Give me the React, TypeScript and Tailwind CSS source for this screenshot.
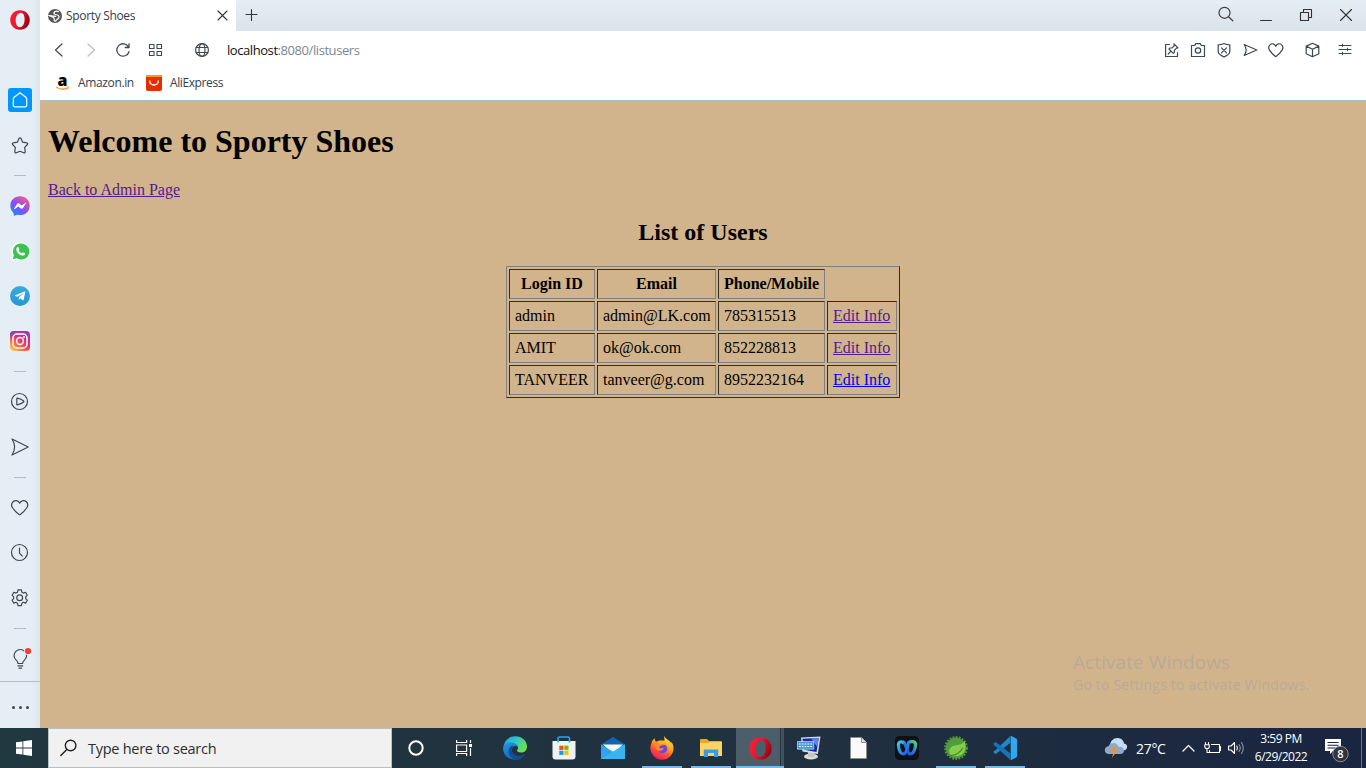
import React from "react";
import type { ReactNode } from "react";
import { FaFacebookMessenger, FaTelegramPlane } from "react-icons/fa";

type IconProps = {
  w: number;
  h?: number;
  children: ReactNode;
  stroke?: string;
  sw?: number;
  className?: string;
};

function Line({ w, h, children, stroke = "#3f474f", sw = 1.2, className = "" }: IconProps) {
  const hh = h ?? w;
  return (
    <svg
      width={w}
      height={hh}
      viewBox={`0 0 ${w} ${hh}`}
      fill="none"
      stroke={stroke}
      strokeWidth={sw}
      strokeLinecap="round"
      strokeLinejoin="round"
      className={`block shrink-0 overflow-visible ${className}`}
    >
      {children}
    </svg>
  );
}

function OperaLogo({ size, id }: { size: number; id: string }) {
  return (
    <svg width={size} height={size} viewBox="0 0 24 24" className="block shrink-0">
      <defs>
        <linearGradient id={id} x1="0" y1="0" x2="1" y2="0.4">
          <stop offset="0" stopColor="#ff1f35" />
          <stop offset="0.5" stopColor="#ee1730" />
          <stop offset="1" stopColor="#9c0714" />
        </linearGradient>
      </defs>
      <path
        fillRule="evenodd"
        fill={`url(#${id})`}
        d="M12 .3C5.300 .3 .3 5.300 .3 12S5.300 23.700 12 23.700 23.700 18.700 23.700 12 18.700 .3 12 .3ZM12.800 3.400c3.200-.2 4.900 3.600 4.700 8.600-.2 4.800-2.500 8.700-5.600 8.700-3.300 0-5.100-3.700-5.100-8.400 0-4.900 2.800-8.700 6-8.900Z"
      />
    </svg>
  );
}

function Slot({ children }: { children: ReactNode }) {
  return <div className="flex h-[45px] w-10 shrink-0 items-center justify-center">{children}</div>;
}

function Divider() {
  return (
    <div className="flex h-4 w-10 shrink-0 items-center justify-center">
      <div className="h-px w-3 bg-[#afbecb]" />
    </div>
  );
}

function Sidebar() {
  return (
    <aside className="flex h-[728px] w-10 shrink-0 flex-col bg-linear-to-r from-[#e5edf5] from-80% to-[#dce4ed]">
      <div className="flex h-10 shrink-0 items-center justify-center">
        <OperaLogo size={20} id="operaSide" />
      </div>
      <div className="mt-[37.5px] flex flex-col">
        <Slot>
          <div className="flex size-6 items-center justify-center rounded-[3px] bg-[#0096ff]">
            <Line w={18} stroke="#fff">
              <path d="M9 1.700 3.200 6.200Q2.300 7 2.300 8v6.600q0 1.200 1.200 1.200h11q1.200 0 1.200-1.200V8q0-1-.9-1.800Z" />
            </Line>
          </div>
        </Slot>
        <Slot>
          <Line w={18} className="mt-px">
            <path d="M7.900 1.600Q9 .2 10.100 1.600l1.500 3.600 4.200.6q1.500.4.6 1.700l-2.700 2.900.5 4.300q0 1.500-1.500 1.100L9 14.300l-3.700 1.500q-1.500.4-1.500-1.100l.5-4.300-2.700-2.900Q.700 6.200 2.200 5.800l4.200-.6Z" />
          </Line>
        </Slot>
        <Divider />
        <Slot>
          <svg width="0" height="0" className="absolute">
            <defs>
              <linearGradient id="msg" x1="0.2" y1="1" x2="0.9" y2="0">
                <stop offset="0" stopColor="#168dff" />
                <stop offset="0.45" stopColor="#8d49fb" />
                <stop offset="1" stopColor="#ff5f77" />
              </linearGradient>
            </defs>
          </svg>
          <div className="flex size-5 items-center justify-center rounded-full bg-[radial-gradient(circle,#fff_50%,transparent_52%)]">
            <FaFacebookMessenger size={20} fill="url(#msg)" stroke="none" />
          </div>
        </Slot>
        <Slot>
          <svg width="19" height="19" viewBox="0 0 18 18" className="block">
            <path d="M9.300.2a8.500 8.500 0 1 1-4 16.300L.3 17.800l1.300-4.900A8.500 8.500 0 0 1 9.300.2Z" fill="#fff" />
            <path d="M9.300 1.400A7.600 7.600 0 1 1 5.500 15.300L1.700 16.300l1-3.700A7.600 7.600 0 0 1 9.300 1.400Z" fill="#3cc250" />
            <path
              d="M6.600 4.700c.4 0 .5.2.7.6l.6 1.400c.1.4-.6 1-.7 1.200.8 1.500 1.800 2.300 3 2.800.3-.2.8-1 1.100-1 .3 0 1.800.8 2 1 .2.5-.2 1.500-.8 1.800-1.400.8-3.500 0-5-1.200C5.800 9.900 5 8.400 5.100 7c0-1 .7-2.300 1.500-2.300Z"
              fill="#fff"
            />
          </svg>
        </Slot>
        <Slot>
          <div className="flex size-5 items-center justify-center rounded-full bg-linear-to-b from-[#38abe0] to-[#2796cf]">
            <FaTelegramPlane size={12} className="mr-px text-white" />
          </div>
        </Slot>
        <Slot>
          <svg width="20" height="20" viewBox="0 0 20 20" className="block">
            <defs>
              <linearGradient id="ig1" x1="0.9" y1="0" x2="0.1" y2="1">
                <stop offset="0" stopColor="#8a39c9" />
                <stop offset="0.4" stopColor="#e02f79" />
                <stop offset="0.7" stopColor="#fb6b3c" />
                <stop offset="1" stopColor="#ffd65c" />
              </linearGradient>
              <radialGradient id="ig2" cx="0.05" cy="0" r="0.5">
                <stop offset="0" stopColor="#5151d8" />
                <stop offset="1" stopColor="#a036b8" stopOpacity="0" />
              </radialGradient>
            </defs>
            <rect width="20" height="20" rx="4" fill="url(#ig1)" />
            <rect width="20" height="20" rx="4" fill="url(#ig2)" />
            <rect x="3" y="3" width="14" height="14" rx="4" fill="none" stroke="#fff" strokeWidth="1.5" />
            <circle cx="10" cy="10" r="3.4" fill="none" stroke="#fff" strokeWidth="1.5" />
            <circle cx="14" cy="6" r="1" fill="#fff" />
          </svg>
        </Slot>
        <Divider />
        <Slot>
          <Line w={18}>
            <circle cx="8.5" cy="8.5" r="8" />
            <path d="M5.800 5.700q0-.6.600-.5 4 .9 6.200 2.800.6.500 0 1-2.200 1.900-6.200 2.800-.6.100-.6-.5Z" />
          </Line>
        </Slot>
        <Slot>
          <Line w={18}>
            <path d="M1 1 17.200 9 1 17Q3.600 13 3.600 9T1 1Z" />
          </Line>
        </Slot>
        <Divider />
        <Slot>
          <Line w={18}>
            <path d="M8.700 4.200C7.400.8 3.700 1.200 2.300 2.500.4 4.300.2 7 1.700 9c1.500 2.300 4 4.900 6.400 6.600q.6.400 1.200 0c2.400-1.700 4.800-4.300 6.300-6.600 1.500-2 1.400-4.700-.5-6.500C13.700 1.200 10.200.8 8.700 4.200Z" />
          </Line>
        </Slot>
        <Slot>
          <Line w={18}>
            <circle cx="8.500" cy="8.500" r="8" />
            <path d="M8.500 4.200v5l2.800 2.900" />
          </Line>
        </Slot>
        <Slot>
          <Line w={18}>
            <circle cx="8.700" cy="8.700" r="2.900" />
            <path d="M7 .8h3.400l.5 2.400 1.500.9 2.200-.8 1.700 2.900-1.600 1.600v1.800l1.600 1.600-1.700 2.900-2.200-.8-1.500.9-.5 2.400H7l-.5-2.400-1.500-.9-2.200.8-1.700-2.900 1.600-1.600V7.800L1.100 6.200l1.700-2.900 2.200.8 1.500-.9Z" />
          </Line>
        </Slot>
        <Divider />
        <Slot>
          <svg width="22" height="22" viewBox="0 0 22 22" fill="none" stroke="#3f474f" strokeWidth="1.2" className="block overflow-visible">
            <path d="M8.800 15.300v-1C8.800 12.700 5 11.900 5 7.800a6.300 6.300 0 0 1 12.600 0c0 4.100-3.800 4.900-3.800 6.500v1M8.500 15.500h5.600M8.500 17.800h5.600M9.500 20.200h3.600" />
            <circle cx="19" cy="3" r="4" fill="#e5edf5" stroke="none" />
            <circle cx="19" cy="3" r="3.100" fill="#ff3a30" stroke="none" />
          </svg>
        </Slot>
      </div>
      <div className="-mt-px flex flex-1 items-center justify-center gap-1 border-t border-[#afbecb] pt-1.5">
        <span className="size-[3px] rounded-full bg-[#3f474f]" />
        <span className="size-[3px] rounded-full bg-[#3f474f]" />
        <span className="size-[3px] rounded-full bg-[#3f474f]" />
      </div>
    </aside>
  );
}

function TabBar() {
  return (
    <div className="flex h-[31px] shrink-0 bg-linear-to-b from-[#e5edf5] to-[#dae2ea]">
      <div className="flex w-[196px] items-center bg-white pl-2">
        <svg width="14" height="14" viewBox="0 0 14 14" className="block">
          <circle cx="7" cy="7" r="7" fill="#53575b" />
          <path d="M10.800 2.800C9 1.800 7.500 2 6.500 3c-.9 1-.7 1.800.3 2.300 1.300.6 3 .3 3.900 1.500.8 1 .3 2.300-.8 3-1 .6-1.400 1.300-2.400 2.200-.5.500-1.400 0-1.300-.8.200-1.200.3-2-.7-2.700C4.300 7.800 2.800 7.300 1.400 6.600c1.500-.3 2.600.4 4 .5 1 .1 1.900.4 2.700 0" fill="none" stroke="#fff" strokeWidth="1.200" />
        </svg>
        <span className="ml-1 w-[140px] text-[12px] tracking-[-0.33px] whitespace-nowrap text-[#333d47]">Sporty Shoes</span>
        <Line w={11} className="ml-[11px]" stroke="#2f363c" sw={1.100}>
          <path d="m1 1 9 9M10 1l-9 9" />
        </Line>
      </div>
      <Line w={12} className="mt-[9px] ml-[9px]" stroke="#2f363c" sw={1.100}>
        <path d="M6.500 .5v11M1 5.500h11" />
      </Line>
      <div className="flex-1" />
      <div className="flex w-[148px] pt-1.5">
        <Line w={16} stroke="#3c3c3c">
          <circle cx="6.500" cy="6.800" r="5.500" />
          <path d="m10.500 10.700 4.300 4.100" />
        </Line>
        <Line w={12} h={16} className="ml-[26px]" stroke="#333" sw={1}>
          <path d="M.5 14.500h11" />
        </Line>
        <Line w={12} h={16} className="ml-7" stroke="#333" sw={1.100}>
          <path d="M.5 6.500h8v8h-8zM3.500 6.500v-3h8v8h-3" />
        </Line>
        <Line w={12} h={16} className="ml-7" stroke="#333" sw={1.100}>
          <path d="m.5 3.500 11 11M11.500 3.500l-11 11" />
        </Line>
      </div>
    </div>
  );
}

function AddressBar() {
  return (
    <div className="flex h-[38px] shrink-0 items-center bg-white pl-3.5">
      <Line w={9} h={14}>
        <path d="M8 1 1.500 7 8 13" />
      </Line>
      <Line w={9} h={14} className="ml-6" stroke="#b9bdc1">
        <path d="m1 1 6.500 6L1 13" />
      </Line>
      <Line w={14} className="ml-5" sw={1.300}>
        <path d="M12.600 4.200A6.200 6.200 0 1 0 13 8.700M13 .8v3.700H9.300" />
      </Line>
      <Line w={14} className="ml-[18px]" sw={1.100}>
        <path d="M1.500 1.500h4.500v4H1.500zM9 1.500h4.500v4H9zM1.500 8.500h4.500v4H1.500zM9 8.500h4.500v4H9z" />
      </Line>
      <Line w={14} className="ml-[33px]" sw={1.200}>
        <circle cx="7" cy="7" r="6.400" />
        <ellipse cx="7" cy="7" rx="3" ry="6.400" />
        <path d="M1.200 4.500h11.600M1.200 9.500h11.600" />
      </Line>
      <span className="mt-0.5 ml-[18px] text-[13px] tracking-[-0.43px] whitespace-nowrap text-[#7b8793]">
        <span className="text-[#111]">localhost</span>:8080/listusers
      </span>
      <div className="flex-1" />
      <div className="flex w-[201px] items-center">
        <Line w={14} sw={1.200}>
          <path d="M4.500 1.500H.6v12h11.900V9.500M9 .8l4 4-1.500.3-2 2-.2 2.500-1 .8L3.900 6l.8-1 2.500-.2 2-2ZM6 8.200 3.200 11" />
        </Line>
        <Line w={14} className="ml-3" sw={1.200}>
          <path d="M.5 2.500h3.200l1-1.900h4.600l1 1.900h3.200v11H.5Z" />
          <circle cx="7" cy="7.500" r="2.700" />
        </Line>
        <Line w={14} className="ml-3" sw={1.200}>
          <path d="M7 .5Q9.500 1.800 12.800 1.800v7c0 2.500-3.300 4-5.800 5.200-2.500-1.200-5.800-2.700-5.800-5.200v-7Q4.500 1.800 7 .5ZM4.500 4.800l5 5M9.500 4.800l-5 5" />
        </Line>
        <Line w={14} className="ml-3" sw={1.200}>
          <path d="m1.200 1.500 12.600 5.500-12.600 5.500Q3.200 9.500 3.200 7t-2-5.500Z" />
        </Line>
        <Line w={15} h={14} className="ml-[11px]" sw={1.200}>
          <path d="M7.800 3.400C6.800.5 3.700.2 2.200 1.600.5 3.100.5 5.500 1.500 7.200c1.300 2 3.700 4.700 6.300 6.500 2.600-1.800 5-4.500 6.300-6.500 1-1.700 1-4.100-.7-5.600C11.900.2 8.800.5 7.800 3.400Z" />
        </Line>
        <Line w={14} className="ml-[22px]" sw={1.200}>
          <path d="M7.500 .3 13.800 3.100v7.600L7.500 13.700l-6.300-3V3.100ZM1.200 3.100 7.500 6.300l6.300-3.200M7.500 6.300v7.400" />
        </Line>
        <Line w={12} className="ml-5" sw={1}>
          <path d="M0 1.500h12M0 5.500h12M0 9.500h12M3.500 .2v2.500M8.500 4.200v2.500M3.500 8.300v2.500" />
        </Line>
      </div>
    </div>
  );
}

function Bookmarks() {
  return (
    <div className="flex h-8 shrink-0 items-center border-b border-[#a9bccd] bg-white pb-[3px] pl-4">
      <svg width="14" height="16" viewBox="0 0 14 16" className="block overflow-visible">
        <text x="1.500" y="11" fontFamily="Open Sans, sans-serif" fontWeight="800" fontSize="16" fill="#000">a</text>
        <path d="M.3 12.300q6 3.400 11.300.9" fill="none" stroke="#f79a1c" strokeWidth="1.300" />
        <path d="m10.300 12 2.400-.1-.7 2.200" fill="none" stroke="#f79a1c" strokeWidth=".8" />
      </svg>
      <span className="ml-2 w-[60px] text-[12px] tracking-[-0.36px] whitespace-nowrap text-[#35414c]">Amazon.in</span>
      <svg width="16" height="16" viewBox="0 0 16 16" className="ml-2 block">
        <rect width="16" height="16" rx="2" fill="#e62e04" />
        <path d="M0 2Q0 0 2 0h12q2 0 2 2Z" fill="#ff9a00" />
        <path d="M3.700 5.800c.3 5.600 8.300 5.600 8.600 0" fill="none" stroke="#fff" strokeWidth="1.300" strokeLinecap="round" />
      </svg>
      <span className="ml-2 text-[12px] tracking-[-0.4px] whitespace-nowrap text-[#35414c]">AliExpress</span>
    </div>
  );
}

const users = [
  { id: "admin", email: "admin@LK.com", phone: "785315513", visited: true },
  { id: "AMIT", email: "ok@ok.com", phone: "852228813", visited: true },
  { id: "TANVEER", email: "tanveer@g.com", phone: "8952232164", visited: false },
];

const cell =
  "h-[30px] border border-t-[#2c2c2c] border-l-[#2c2c2c] border-r-[#808080] border-b-[#808080] px-[5px] py-0 leading-[18px] whitespace-nowrap";

function Page() {
  return (
    <main className="relative flex-1 bg-[#d2b48c] px-2 pt-[22px] font-['Liberation_Serif',serif] text-base leading-[18px] text-black">
      <h1 className="text-[32px] leading-9 font-bold">Welcome to Sporty Shoes</h1>
      <div className="mt-[22px] h-[18px]">
        <a className="text-[#551a8b] underline">Back to Admin Page</a>
      </div>
      <h2 className="mt-[19px] text-center text-2xl leading-7 font-bold">List of Users</h2>
      <table className="mx-auto mt-5 w-[394px] table-fixed border-separate border-spacing-[2px] border border-t-[#808080] border-r-[#2c2c2c] border-b-[#2c2c2c] border-l-[#808080]">
        <colgroup>
          <col className="w-[86px]" />
          <col className="w-[119px]" />
          <col className="w-[107px]" />
          <col className="w-[70px]" />
        </colgroup>
        <tbody>
          <tr>
            <th className={cell}>Login ID</th>
            <th className={cell}>Email</th>
            <th className={cell}>Phone/Mobile</th>
          </tr>
          {users.map((u) => (
            <tr key={u.id}>
              <td className={cell}>{u.id}</td>
              <td className={cell}>{u.email}</td>
              <td className={cell}>{u.phone}</td>
              <td className={cell}>
                <a className={u.visited ? "text-[#551a8b] underline" : "text-[#0000ee] underline"}>Edit Info</a>
              </td>
            </tr>
          ))}
        </tbody>
      </table>
      <div className="absolute top-[548px] left-[1033px] font-['Open_Sans',sans-serif] whitespace-nowrap text-[#b9aa97]">
        <div className="text-[19px] leading-[26px] tracking-[0.08px]">Activate Windows</div>
        <div className="text-[14px] leading-5 tracking-[0.2px]">Go to Settings to activate Windows.</div>
      </div>
    </main>
  );
}

function TaskItem({ children, open, active }: { children: ReactNode; open?: boolean; active?: boolean }) {
  return (
    <div className="flex h-10 w-[49px] shrink-0 flex-col items-center">
      {active ? (
        <div className="flex h-10 w-12 flex-col">
          <div className="flex flex-1">
            <div className="flex w-11 items-center justify-center bg-[#4c5e69] pt-0.5 pl-1">{children}</div>
            <div className="w-px bg-[#26343e]" />
            <div className="flex-1 bg-[#43545f]" />
          </div>
          <div className="h-0.5 bg-[#76b9ed]" />
        </div>
      ) : (
        <>
          <div className="flex flex-1 items-center pt-0.5">{children}</div>
          <div className={open ? "h-0.5 w-10 bg-[#76b9ed]" : "h-0.5 w-10"} />
        </>
      )}
    </div>
  );
}

function Taskbar() {
  return (
    <footer className="flex h-10 shrink-0 bg-linear-to-r from-[#203840] via-[#20303f] via-60% to-[#1a2541] text-white">
      <div className="flex w-12 items-center justify-center">
        <svg width="16" height="16" viewBox="0 0 16 16" fill="#fff" className="block">
          <path d="M0 2.300 6.500 1.400v6.100H0zM7.300 1.200 16 0v7.500H7.300zM0 8.400h6.500v6.100L0 13.700zM7.300 8.400H16V16l-8.700-1.300z" />
        </svg>
      </div>
      <div className="flex w-[344px] items-center border border-[#bcc0c2] bg-[#f1f1f1] pl-[11px]">
        <Line w={17} h={18} stroke="#222" sw={1.400}>
          <circle cx="10.600" cy="6.500" r="5.300" />
          <path d="m6.800 10.400-6 6" />
        </Line>
        <span className="mt-0.5 ml-[11px] text-[14.500px] tracking-[-0.27px] whitespace-nowrap text-[#2d2d2d]">Type here to search</span>
      </div>
      <div className="flex w-12 items-center justify-center">
        <svg width="16" height="16" viewBox="0 0 16 16" className="block">
          <circle cx="8" cy="8" r="6.700" fill="none" stroke="#fff" strokeWidth="2" />
        </svg>
      </div>
      <div className="mr-[2.5px] flex w-12 items-center justify-center">
        <svg width="17" height="16" viewBox="0 0 17 16" fill="none" stroke="#fff" strokeWidth="1.200" className="block">
          <path d="M.6 0v2.500h10V0M.6 5h10v6.500H.6zM.6 16v-2.500h10V16M14.500 0v3M14.500 8v8" />
          <path d="M13 4h3v3h-3z" fill="#fff" stroke="none" />
        </svg>
      </div>
      <TaskItem>
        <svg width="24" height="24" viewBox="0 0 24 24" className="block">
          <defs>
            <linearGradient id="edgeTop" x1="0" y1="0" x2="1" y2="0.500">
              <stop offset="0" stopColor="#229fe0" />
              <stop offset="0.5" stopColor="#2fc3c9" />
              <stop offset="1" stopColor="#6ae04d" />
            </linearGradient>
            <linearGradient id="edgeLow" x1="0" y1="0" x2="0.800" y2="1">
              <stop offset="0" stopColor="#2496e5" />
              <stop offset="1" stopColor="#0e5fb4" />
            </linearGradient>
          </defs>
          <path d="M.4 10.500C1.500 4.500 6 .3 12.300.3 19 .3 24 5 24 10.700c0 3.500-2.500 5.800-6 5.800-2.700 0-4-1-4-2 0-.8 1-1 1-2.700C15 9.500 12 7 8 7 4.500 7 1.500 8.500.4 10.500Z" fill="url(#edgeTop)" />
          <path d="M.1 12.500C.1 8.700 3.500 6.600 7.500 6.600c4.400 0 7.500 2.400 7.500 5-.5-1-1.700-1.600-3-1.500-2 .2-3.400 2.200-3.100 4.600.4 3.800 4.500 6.300 8.300 5.500 1.700-.3 3.300-1 4.600-2-.9 2.400-4.800 5.500-9.600 5.500C5.500 23.700.1 19 .1 12.500Z" fill="url(#edgeLow)" />
          <path d="M7.800 10.200c-4.500 4.700-1.500 11.800 4.500 13.500 4.300.1 8-2.500 9.500-5.500-1.300 1-2.900 1.700-4.600 2-3.800.8-7.900-1.700-8.300-5.500-.3-2.400 1.100-4.400 3.100-4.600-1.500-.6-3-.6-4.200.1Z" fill="#104f91" />
        </svg>
      </TaskItem>
      <TaskItem>
        <svg width="24" height="24" viewBox="0 0 24 24" className="block">
          <path d="M6 6V2.500Q6 1 7.500 1h8.500q1.500 0 1.500 1.500V6" fill="none" stroke="#27a9e8" strokeWidth="1.600" />
          <path d="M.5 5h23v15.500q0 3-3 3h-17q-3 0-3-3Z" fill="#f1f1f0" />
          <path d="M6 5v1.500M17.500 5v1.500" stroke="#27a9e8" strokeWidth="1.600" />
          <path d="M7.300 9.700h4.200v4.200H7.300z" fill="#f04e23" />
          <path d="M12.300 9.700h4.200v4.200h-4.200z" fill="#7cb900" />
          <path d="M7.300 14.700h4.200v4.200H7.300z" fill="#00a3ee" />
          <path d="M12.300 14.700h4.200v4.200h-4.200z" fill="#ffb900" />
        </svg>
      </TaskItem>
      <TaskItem>
        <svg width="24" height="24" viewBox="0 0 24 24" className="block">
          <path d="M0 8.500 12 1l12 7.500V14H0Z" fill="#1464b5" />
          <path d="M2 8.500h20L12 18Z" fill="#f3f5f7" />
          <path d="M0 8.500 24 23H0Z" fill="#2ba5ee" />
          <path d="M24 8.500V23L12 15.800Z" fill="#4ccbf8" />
          <path d="M0 23 24 8.500V23Z" fill="#35b6f3" />
        </svg>
      </TaskItem>
      <TaskItem open>
        <svg width="24" height="24" viewBox="0 0 24 24" className="block">
          <defs>
            <linearGradient id="fox" x1="0.800" y1="0" x2="0.300" y2="1">
              <stop offset="0" stopColor="#fff044" />
              <stop offset="0.4" stopColor="#ffa51f" />
              <stop offset="0.7" stopColor="#ff4c38" />
              <stop offset="1" stopColor="#e71974" />
            </linearGradient>
          </defs>
          <path d="M14.500 0c-.6 2 .2 3.200 0 4.800-3-.8-6.500-.3-8.200 1C5 5 4.700 3.700 4.700 2.200 2.600 3.700 1.700 5.500 1.300 7.700.3 9.200.3 11.200.5 13.200 1.300 19 6 23.700 12 23.700c6.500 0 11.300-5 11.500-11 .1-3-.8-5.300-2.500-7.200l.5 2.200C20 4 15.500 3.500 14.500 0Z" fill="url(#fox)" />
          <path d="M7.500 8.500c2-.8 4-.2 5.200.6 2.200-1 5 .8 4.700 4-.2 2.700-2.800 4.300-5.400 4-3-.2-4.500-2.200-4.500-4.600Z" fill="#7643da" />
          <path d="M4.500 6.500c2-.4 3.700.2 5 1.500l3 .2c0 1.500-2 1.600-3 2.300-.7.800-.2 2 1.300 2 1 0 2.100-.7 3-.4-1 2.400-3.300 3.400-5.600 2.300C5.500 13 3.500 10 4.500 6.500Z" fill="#ff8b28" />
        </svg>
      </TaskItem>
      <TaskItem open>
        <svg width="22" height="20" viewBox="0 0 22 20" className="block">
          <path d="M0 2q0-1 1-1h6l2 2h12q1 0 1 1v4H0Z" fill="#e9a81d" />
          <path d="M0 5h8l2-1h11q1 0 1 1v13H0Z" fill="#ffd264" />
          <path d="M3.800 11.500h14.400V19H14v-4H8v4H3.800Z" fill="#3b9de0" />
        </svg>
      </TaskItem>
      <TaskItem active>
        <OperaLogo size={23} id="operaTask" />
      </TaskItem>
      <TaskItem>
        <svg width="24" height="24" viewBox="0 0 24 24" className="block">
          <ellipse cx="14" cy="20.500" rx="7" ry="3" fill="#dcdcd6" />
          <path d="m11 15.500 6.500 1v4.500H11Z" fill="#c4c4c0" />
          <path d="m4 1.500 19.500-1L20.800 18 5.500 15.500Z" fill="#dadde3" />
          <path d="m5.500 2.800 16.300-.9-2.300 14L7 13.800Z" fill="#1628a3" />
          <path d="m14 2.400 7.800-.5-1.500 9Z" fill="#6183ed" />
          <path d="M.5 5.500h16.300v7.700H.5Z" fill="#4a96d6" stroke="#c4e0f4" strokeWidth=".7" />
          <path d="M2 8h13M2 10.500h13" stroke="#e5f5ff" strokeWidth="1.200" strokeDasharray="1.800 1" />
        </svg>
      </TaskItem>
      <TaskItem>
        <svg width="17" height="22" viewBox="0 0 17 22" className="block">
          <path d="M.5 .5h11l5 5v16H.5Z" fill="#fafafa" stroke="#8a8a8a" strokeWidth=".6" />
          <path d="M11.500.5v5h5" fill="#ddd" stroke="#777" strokeWidth=".8" />
        </svg>
      </TaskItem>
      <TaskItem>
        <svg width="24" height="24" viewBox="0 0 24 24" className="block">
          <defs>
            <linearGradient id="wx1" x1="0" y1="0" x2="1" y2="1">
              <stop offset="0" stopColor="#36c8f4" />
              <stop offset="1" stopColor="#1c53e8" />
            </linearGradient>
            <linearGradient id="wx2" x1="0" y1="1" x2="1" y2="0">
              <stop offset="0" stopColor="#1649e5" />
              <stop offset="0.6" stopColor="#2b7bf0" />
              <stop offset="1" stopColor="#43e06d" />
            </linearGradient>
          </defs>
          <rect width="24" height="24" rx="4.500" fill="#101112" />
          <path d="M13.500 6.500C16 5 20.500 5 20.500 8.500c0 3.500-1.500 9-5 9.500C11.500 18.300 12 9 8.500 6" fill="none" stroke="url(#wx2)" strokeWidth="3.200" strokeLinecap="round" />
          <path d="M8 6.500C5.500 5 3.200 6 3.400 9c.4 4.500 2 9 5 9 3.200 0 3.600-5 4.800-9.500" fill="none" stroke="url(#wx1)" strokeWidth="3.200" strokeLinecap="round" />
        </svg>
      </TaskItem>
      <TaskItem open>
        <svg width="24" height="24" viewBox="0 0 24 24" className="block">
          <circle cx="12" cy="12" r="10.400" fill="#539b3b" />
          <circle cx="12" cy="12" r="11" fill="none" stroke="#539b3b" strokeWidth="1.800" strokeDasharray="1.800 1.400" />
          <path d="M20.500 5c1.500 4.500 1.500 10-2 13-3.500 3-8.500 2.500-11.500 1C4 16.500 4.500 10.500 11 9.500c4.500-.5 7.500-1.500 9.500-4.500Z" fill="#86ce4b" />
          <path d="M6 19.500c5-.2 10-2 13-8" fill="none" stroke="#438a31" strokeWidth="1.200" />
        </svg>
      </TaskItem>
      <TaskItem open>
        <svg width="24" height="24" viewBox="0 0 24 24" className="block">
          <path d="M17 .2 3.500 13.200.7 15.300q-.8.600 0 1.300l1.200 1.200q.6.500 1.200 0L17.500 6.700Z" fill="#1c86cf" />
          <path d="M17.500 17.500 3.100 6.300q-.6-.5-1.200 0L.7 7.400q-.8.700 0 1.300L17 23.800Z" fill="#1673b7" />
          <path d="M17 .3q.6-.5 1.300-.2l4.800 2.300q.9.500.9 1.400v16.400q0 .9-.9 1.400l-4.800 2.300q-.7.300-1.300-.3.700.4.700-.7V1.200Q17.700 0 17 .3Z" fill="#2da9f2" />
        </svg>
      </TaskItem>
      <div className="flex-1" />
      <div className="flex w-[262px] items-center">
        <svg width="24" height="22" viewBox="0 0 24 22" className="block overflow-visible">
          <path d="M6 9C6 4 9.500 1 13.500 1 18 1 20 4.500 20 6.500c2.500.5 3.500 2 3 4-.4 2-1.800 3-4 3H9Z" fill="#c6dcf5" />
          <path d="M5 17C2 17 .8 15.300.8 13c0-2.500 2-3.800 3.700-3.800C5.500 7 7 6 9.500 6c3 0 4.500 2 5 3.800 3.500-.6 5.500 1.200 5.500 3.600 0 2.300-1.500 3.600-4 3.600Z" fill="#8ea9c9" />
          <path d="m9.500 9.500-3 6h3L7.800 21l5.700-7.500h-3l2-4Z" fill="#f7931b" />
        </svg>
        <span className="ml-2 w-[34px] text-[14px] tracking-[-0.3px] whitespace-nowrap">27°C</span>
        <Line w={13} h={8} className="ml-3" stroke="#fff" sw={1.300}>
          <path d="m1 7 5.500-5.500L12 7" />
        </Line>
        <Line w={17} h={12} className="ml-[9px]" stroke="#fff" sw={1.100}>
          <path d="M7.500 2.500h8v8H5.500V8.500M16.500 4.500v4M1.500 .5v2M4.500 .5v2M.8 2.700h4.500v2q0 1.800-2.200 1.800T.8 4.700ZM3 6.700v3.800h2.500" />
        </Line>
        <Line w={17} h={14} className="ml-[7px]" stroke="#fff" sw={1.100}>
          <path d="M.6 5h2.500L6.500 1.500v11L3.100 9H.6ZM8.800 5q1.200 2 0 4" />
          <path d="M11 3.500q2.500 3.500 0 7M13.500 1.500q3.500 5.500 0 11" stroke="#8b94a2" />
        </Line>
        <div className="ml-[9px] flex w-[54px] flex-col items-center text-[12px] leading-[18px] tracking-[-0.500px] whitespace-nowrap">
          <span>3:59 PM</span>
          <span>6/29/2022</span>
        </div>
        <svg width="26" height="26" viewBox="0 0 26 26" className="mt-1.5 ml-[16px] block">
          <path d="M1 1h16v12H9l-3 3v-3H1Z" fill="#fff" />
          <path d="M3.500 4.500h11M3.500 7.300h11M3.500 10h8" stroke="#1a2541" strokeWidth="1.100" />
          <circle cx="16.500" cy="16" r="7.700" fill="#30343c" stroke="#888d96" strokeWidth="1" />
          <text x="16.500" y="20" textAnchor="middle" fontFamily="Open Sans, sans-serif" fontSize="11" fontWeight="600" fill="#fff">8</text>
        </svg>
        <div className="flex-1" />
        <div className="mr-1 h-10 w-px bg-[#68738a]" />
      </div>
    </footer>
  );
}

export default function App() {
  return (
    <div className="flex h-[768px] w-[1366px] flex-col overflow-hidden font-['Open_Sans',sans-serif]">
      <div className="flex h-[728px] shrink-0">
        <Sidebar />
        <div className="flex w-[1326px] flex-col">
          <TabBar />
          <AddressBar />
          <Bookmarks />
          <Page />
        </div>
      </div>
      <Taskbar />
    </div>
  );
}
